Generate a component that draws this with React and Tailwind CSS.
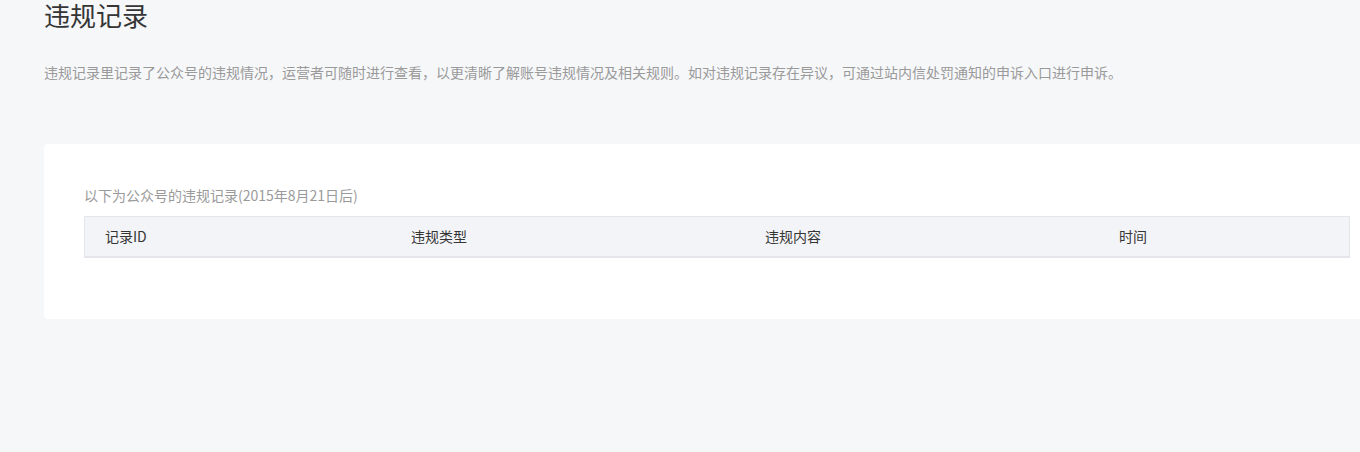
export default function App() {
  const cols = ["记录ID", "违规类型", "违规内容", "时间"];

  return (
    <div
      className="w-[1360px] h-[452px] overflow-hidden bg-[#f6f7f9] text-[#353535]"
      style={{ fontFamily: '"Noto Sans CJK SC", "Noto Sans", sans-serif' }}
    >
      <div className="pl-[44px]">
        <h2 className="text-[26px] leading-[30px] font-normal text-[#353535]">违规记录</h2>
        <p className="mt-[34px] text-[14px] leading-[16px] text-[#9a9a9a]">
          违规记录里记录了公众号的违规情况，运营者可随时进行查看，以更清晰了解账号违规情况及相关规则。如对违规记录存在异议，可通过站内信处罚通知的申诉入口进行申诉。
        </p>

        <div className="mt-[64px] w-[1346px] h-[175px] bg-white rounded-[4px] px-[40px] pt-[41px]">
          <p className="text-[14px] leading-[20px] text-[#9a9a9a]">以下为公众号的违规记录(2015年8月21日后)</p>
          <div className="mt-[11px] w-[1266px] h-[42px] grid grid-cols-[306px_354px_354px_1fr] items-center bg-[#f3f4f7] border border-b-2 border-[#e4e6eb] pl-[20px] text-[14px]">
            {cols.map((c) => (
              <div key={c}>{c}</div>
            ))}
          </div>
        </div>
      </div>
    </div>
  );
}
